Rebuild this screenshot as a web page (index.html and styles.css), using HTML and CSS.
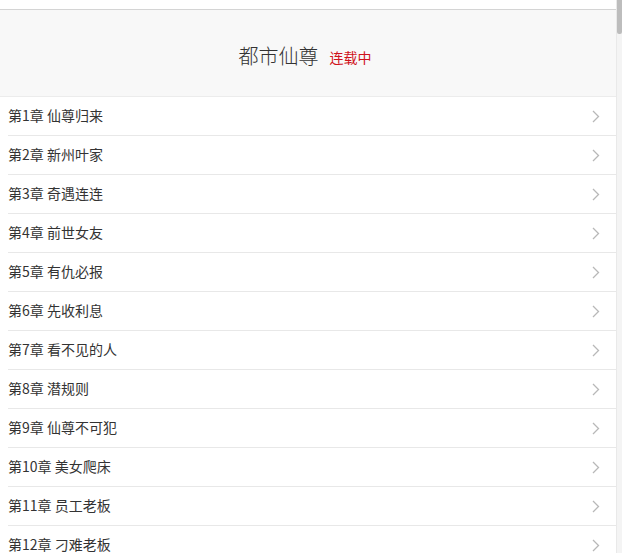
FILE: index.html
```html
<!DOCTYPE html>
<html lang="zh-CN">
<head>
<meta charset="utf-8">
<title>都市仙尊</title>
<link rel="stylesheet" href="styles.css">
</head>
<body>
<div class="page">
  <div class="main">
    <div class="topbar"></div>
    <div class="header">
      <h1 class="title">都市仙尊</h1>
      <span class="status">连载中</span>
    </div>
    <ul class="list">
      <li class="item"><span class="name">第1章 仙尊归来</span><svg class="arrow" viewBox="0 0 8 13"><path d="M1 1l5.5 5.5L1 12"/></svg></li>
      <li class="item"><span class="name">第2章 新州叶家</span><svg class="arrow" viewBox="0 0 8 13"><path d="M1 1l5.5 5.5L1 12"/></svg></li>
      <li class="item"><span class="name">第3章 奇遇连连</span><svg class="arrow" viewBox="0 0 8 13"><path d="M1 1l5.5 5.5L1 12"/></svg></li>
      <li class="item"><span class="name">第4章 前世女友</span><svg class="arrow" viewBox="0 0 8 13"><path d="M1 1l5.5 5.5L1 12"/></svg></li>
      <li class="item"><span class="name">第5章 有仇必报</span><svg class="arrow" viewBox="0 0 8 13"><path d="M1 1l5.5 5.5L1 12"/></svg></li>
      <li class="item"><span class="name">第6章 先收利息</span><svg class="arrow" viewBox="0 0 8 13"><path d="M1 1l5.5 5.5L1 12"/></svg></li>
      <li class="item"><span class="name">第7章 看不见的人</span><svg class="arrow" viewBox="0 0 8 13"><path d="M1 1l5.5 5.5L1 12"/></svg></li>
      <li class="item"><span class="name">第8章 潜规则</span><svg class="arrow" viewBox="0 0 8 13"><path d="M1 1l5.5 5.5L1 12"/></svg></li>
      <li class="item"><span class="name">第9章 仙尊不可犯</span><svg class="arrow" viewBox="0 0 8 13"><path d="M1 1l5.5 5.5L1 12"/></svg></li>
      <li class="item"><span class="name">第10章 美女爬床</span><svg class="arrow" viewBox="0 0 8 13"><path d="M1 1l5.5 5.5L1 12"/></svg></li>
      <li class="item"><span class="name">第11章 员工老板</span><svg class="arrow" viewBox="0 0 8 13"><path d="M1 1l5.5 5.5L1 12"/></svg></li>
      <li class="item"><span class="name">第12章 刁难老板</span><svg class="arrow" viewBox="0 0 8 13"><path d="M1 1l5.5 5.5L1 12"/></svg></li>
    </ul>
  </div>
  <div class="scrollbar"><div class="thumb"></div></div>
</div>
</body>
</html>
```
FILE: styles.css
```css
html, body {
  margin: 0;
  padding: 0;
  height: 100%;
  overflow: hidden;
  background: #fff;
}
body {
  font-family: "Noto Sans CJK SC", "Microsoft YaHei", sans-serif;
  color: #333;
}
.page {
  display: flex;
  height: 553px;
  overflow: hidden;
}
.main {
  flex: 1;
  min-width: 0;
}
.topbar {
  height: 9px;
  border-bottom: 1px solid #d4d4d4;
  background: #fff;
}
.header {
  box-sizing: border-box;
  height: 87px;
  padding: 6px 6px 0 0;
  background: #f8f8f8;
  border-bottom: 1px solid #ececec;
  display: flex;
  align-items: center;
  justify-content: center;
  gap: 11px;
}
.title {
  margin: 0;
  font-size: 20px;
  font-weight: 300;
  color: #333;
  line-height: 24px;
}
.status {
  font-size: 14px;
  color: #d0121b;
  line-height: 18px;
  margin-top: 2px;
}
.list {
  list-style: none;
  margin: 0 0 0 8px;
  padding: 0;
}
.item {
  box-sizing: border-box;
  height: 39px;
  padding: 0 16px 2px 0;
  border-bottom: 1px solid #e8e8e8;
  display: flex;
  align-items: center;
  justify-content: space-between;
}
.name {
  font-size: 14px;
  color: #333;
  line-height: 20px;
}
.arrow {
  width: 8px;
  height: 13px;
  fill: none;
  stroke: #b8b8b8;
  stroke-width: 1.3;
  margin-top: 2px;
}
.scrollbar {
  width: 5px;
  flex: none;
  background: #f4f4f4;
  border-left: 1px solid #e9e9e9;
}
.thumb {
  height: 34px;
  background: #bdbdbd;
  border-radius: 0 0 2px 2px;
}
```
